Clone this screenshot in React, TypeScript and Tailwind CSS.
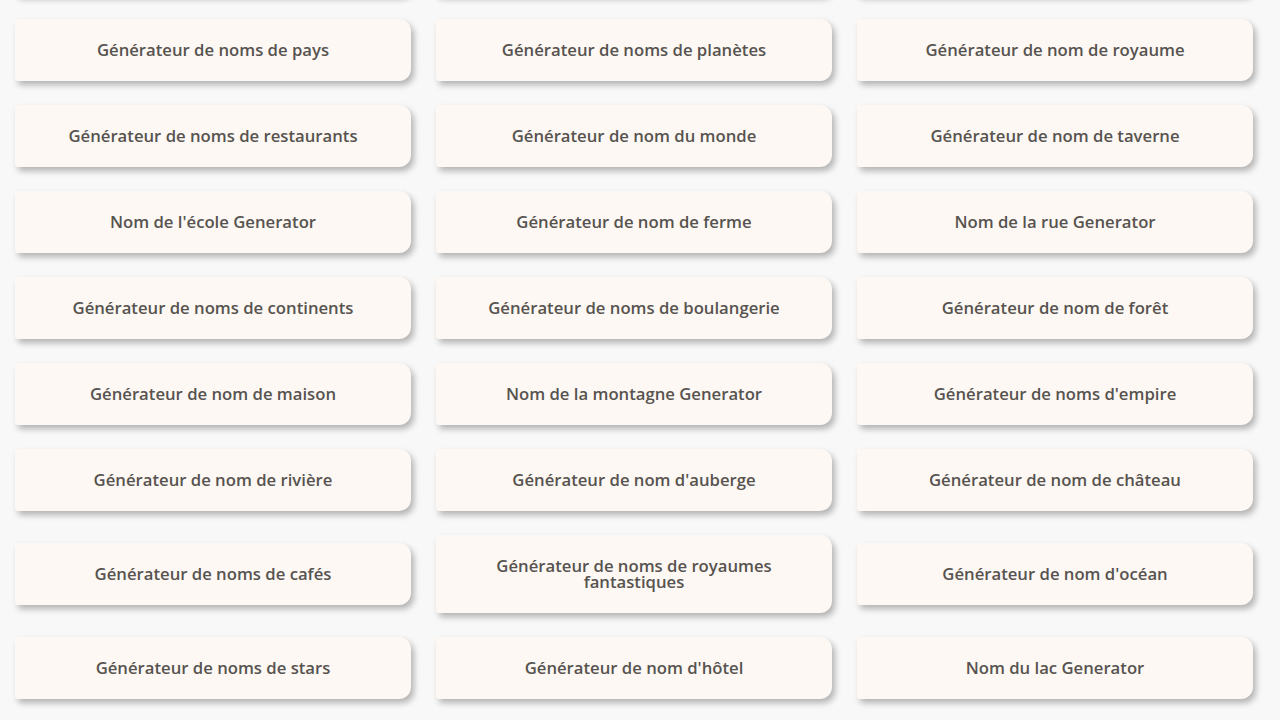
const generators: string[] = [
  "Générateur de noms de villes",
  "Générateur de noms de villages",
  "Générateur de noms de magasins",
  "Générateur de noms de pays",
  "Générateur de noms de planètes",
  "Générateur de nom de royaume",
  "Générateur de noms de restaurants",
  "Générateur de nom du monde",
  "Générateur de nom de taverne",
  "Nom de l'école Generator",
  "Générateur de nom de ferme",
  "Nom de la rue Generator",
  "Générateur de noms de continents",
  "Générateur de noms de boulangerie",
  "Générateur de nom de forêt",
  "Générateur de nom de maison",
  "Nom de la montagne Generator",
  "Générateur de noms d'empire",
  "Générateur de nom de rivière",
  "Générateur de nom d'auberge",
  "Générateur de nom de château",
  "Générateur de noms de cafés",
  "Générateur de noms de royaumes fantastiques",
  "Générateur de nom d'océan",
  "Générateur de noms de stars",
  "Générateur de nom d'hôtel",
  "Nom du lac Generator",
  "Générateur de noms d'îles",
  "Générateur de noms de galaxies",
  "Générateur de noms de quartiers",
];

function GeneratorCard({ label }: { label: string }) {
  return (
    <a
      href="#"
      className="block bg-[#fdf8f3] rounded-l-[3px] rounded-r-[12px] px-6 py-[23px] text-center text-[16.7px] leading-[16px] font-semibold text-[#575350] shadow-[3px_4px_6px_rgba(0,0,0,0.28)]"
    >
      {label}
    </a>
  );
}

export default function App() {
  return (
    <div
      className="h-[720px] overflow-hidden bg-[#f8f8f8]"
      style={{ fontFamily: '"Open Sans", "Noto Sans", sans-serif' }}
    >
      <div className="mt-[-67px] grid grid-cols-3 items-center gap-x-[25px] gap-y-[24px] pl-[15px] pr-[27px]">
        {generators.map((g) => (
          <GeneratorCard key={g} label={g} />
        ))}
      </div>
    </div>
  );
}
